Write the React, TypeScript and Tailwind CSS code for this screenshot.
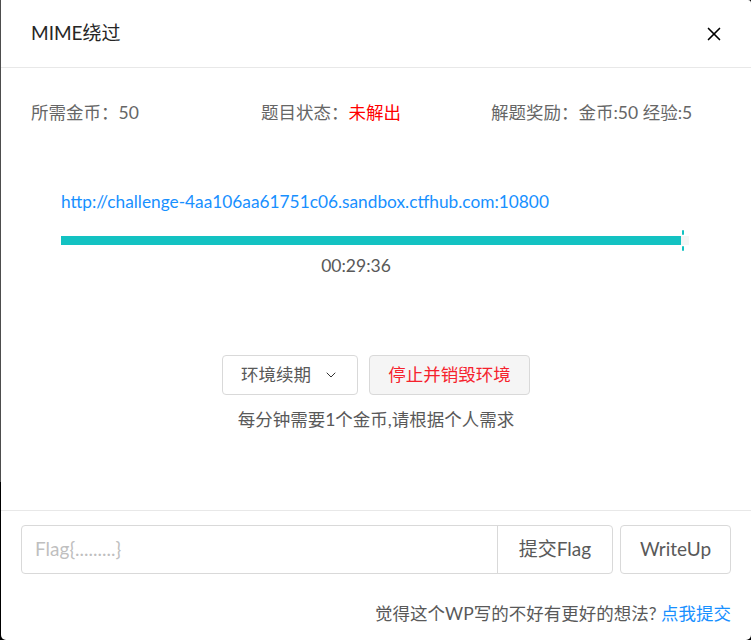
import { ChevronDown, X } from "lucide-react";

const font = { fontFamily: 'Lato, "Noto Sans CJK SC", sans-serif' };

export default function App() {
  return (
    <div className="flex h-[640px] w-[751px] overflow-hidden bg-black" style={font}>
      <div className="flex w-px flex-col">
        <div className="h-[482px] bg-[#4d4d4d]" />
        <div className="flex-1 bg-black" />
      </div>
      <div className="flex flex-1 flex-col rounded-tr-[3px] rounded-b-[5px] bg-white">
        {/* header */}
        <div className="flex h-[68px] items-center justify-between border-b border-[#e8e8e8] pl-[30px] pr-[26px]">
          <span className="text-[19px] text-[#262626]">MIME绕过</span>
          <X className="h-[22px] w-[22px] text-black" strokeWidth={1.8} />
        </div>

        {/* info */}
        <div className="grid grid-cols-3 px-[30px] pt-[32px] text-[17.5px] leading-[26px] text-[#666]">
          <span>所需金币：50</span>
          <span>
            题目状态：<span className="text-[#ff0000]">未解出</span>
          </span>
          <span>解题奖励：金币:50 经验:5</span>
        </div>

        {/* env */}
        <div className="flex flex-col pl-[60px] pr-[62px] pt-[63px]">
          <a className="text-[17.3px] leading-[26px] text-[#1890ff]">
            http://challenge-4aa106aa61751c06.sandbox.ctfhub.com:10800
          </a>
          <div className="relative mt-[21px] flex h-[9px] bg-[#f5f5f5]">
            <div className="h-full w-[620px] bg-[#13c2c2]" />
            <div className="absolute left-[621px] top-[-6px] flex h-[21px] w-[2px] flex-col justify-between">
              <div className="h-[5px] rounded-full bg-[#13c2c2]" />
              <div className="h-[5px] rounded-full bg-[#13c2c2]" />
            </div>
          </div>
          <div className="mt-[8px] pr-[38px] text-center text-[17.5px] leading-[26px] text-[#595959]">00:29:36</div>
        </div>

        <div className="mt-[76px] flex justify-center gap-[11px]">
          <button className="flex h-[40px] w-[136px] items-center justify-center gap-[12px] rounded-[4px] border border-[#d9d9d9] bg-white text-[17.5px] text-[#595959]">
            环境续期
            <ChevronDown className="h-[16px] w-[16px] text-[#333]" strokeWidth={1.5} />
          </button>
          <button className="h-[40px] w-[161px] rounded-[4px] border border-[#d9d9d9] bg-[#f5f5f5] text-[17.5px] text-[#f5222d]">
            停止并销毁环境
          </button>
        </div>
        <div className="mt-[12px] text-center text-[17.5px] leading-[26px] text-[#595959]">每分钟需要1个金币,请根据个人需求</div>

        {/* footer */}
        <div className="mt-[77px] border-t border-[#e8e8e8] px-[20px] pt-[14px]">
          <div className="flex gap-[7px]">
            <div className="flex h-[49px] flex-1 rounded-[4px] border border-[#d9d9d9]">
              <input
                placeholder="Flag{.........}"
                className="min-w-0 flex-1 px-[13px] text-[19px] text-[#595959] outline-none placeholder:text-[#bfbfbf]"
              />
              <button className="w-[115px] border-l border-[#d9d9d9] text-[19px] text-[#595959]">提交Flag</button>
            </div>
            <button className="h-[49px] w-[111px] rounded-[4px] border border-[#d9d9d9] text-[19px] text-[#595959]">
              WriteUp
            </button>
          </div>
          <div className="mt-[27px] text-right text-[17.5px] leading-[26px] text-[#595959]">
            觉得这个WP写的不好有更好的想法? <span className="text-[#1890ff]">点我提交</span>
          </div>
        </div>
      </div>
    </div>
  );
}
